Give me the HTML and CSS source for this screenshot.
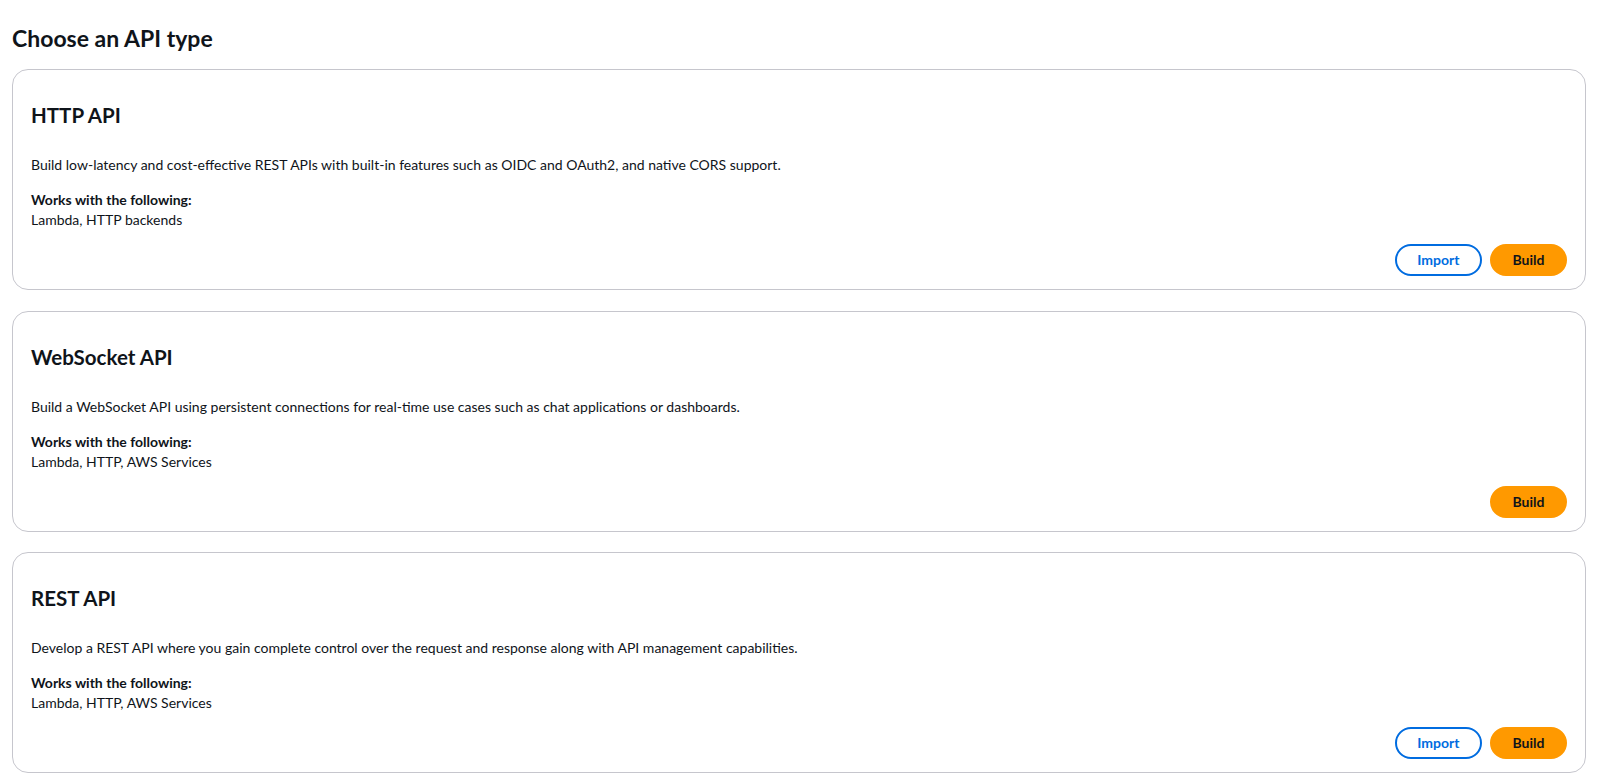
FILE: index.html
```html
<!DOCTYPE html>
<html lang="en">

<head>
    <meta charset="UTF-8">
    <meta name="viewport" content="width=device-width, initial-scale=1.0">
    <title>Choose an API type</title>
    <link rel="stylesheet" href="styles.css">
</head>

<body>
    <h1 class="page-title">Choose an API type</h1>

    <!-- HTTP API -->
    <div class="card">
        <h2 class="card-title">HTTP API</h2>
        <p class="card-desc">Build low-latency and cost-effective REST APIs with built-in features such as OIDC and OAuth2, and native CORS support.</p>
        <div class="works">
            <strong>Works with the following:</strong>
            <span>Lambda, HTTP backends</span>
        </div>
        <div class="actions">
            <button class="btn btn-normal">Import</button>
            <button class="btn btn-primary">Build</button>
        </div>
    </div>

    <!-- WebSocket API -->
    <div class="card">
        <h2 class="card-title">WebSocket API</h2>
        <p class="card-desc">Build a WebSocket API using persistent connections for real-time use cases such as chat applications or dashboards.</p>
        <div class="works">
            <strong>Works with the following:</strong>
            <span>Lambda, HTTP, AWS Services</span>
        </div>
        <div class="actions">
            <button class="btn btn-primary">Build</button>
        </div>
    </div>

    <!-- REST API -->
    <div class="card">
        <h2 class="card-title">REST API</h2>
        <p class="card-desc">Develop a REST API where you gain complete control over the request and response along with API management capabilities.</p>
        <div class="works">
            <strong>Works with the following:</strong>
            <span>Lambda, HTTP, AWS Services</span>
        </div>
        <div class="actions">
            <button class="btn btn-normal">Import</button>
            <button class="btn btn-primary">Build</button>
        </div>
    </div>
</body>

</html>
```

FILE: styles.css
```css
body {
    font-family: Lato, "Open Sans", sans-serif;
    background-color: #fff;
    color: #0f141a;
    margin: 0;
    padding: 24px 14px 0 12px;
}

.page-title {
    font-size: 23px;
    line-height: 28px;
    font-weight: 700;
    margin: 0 0 17px 0;
}

.card {
    border: 1px solid #c6c6cd;
    border-radius: 16px;
    padding: 33px 18px 13px 18px;
    margin-bottom: 20.5px;
}

.card-title {
    font-size: 20.5px;
    line-height: 24px;
    font-weight: 700;
    margin: 0 0 28px 0;
}

.card-desc {
    font-size: 14px;
    line-height: 20px;
    margin: 0 0 15px 0;
}

.works {
    font-size: 14px;
    line-height: 20px;
}

.works strong,
.works span {
    display: block;
}

.actions {
    display: flex;
    justify-content: flex-end;
    gap: 8px;
    margin-top: 14px;
}

.btn {
    font-family: inherit;
    font-size: 14px;
    font-weight: 700;
    line-height: 24px;
    padding: 2px 20.5px;
    border-radius: 20px;
    border: 2px solid transparent;
    cursor: pointer;
}

.btn-normal {
    background-color: #fff;
    border-color: #006ce0;
    color: #006ce0;
}

.btn-primary {
    background-color: #ff9900;
    border-color: #ff9900;
    color: #0f141a;
}
```
